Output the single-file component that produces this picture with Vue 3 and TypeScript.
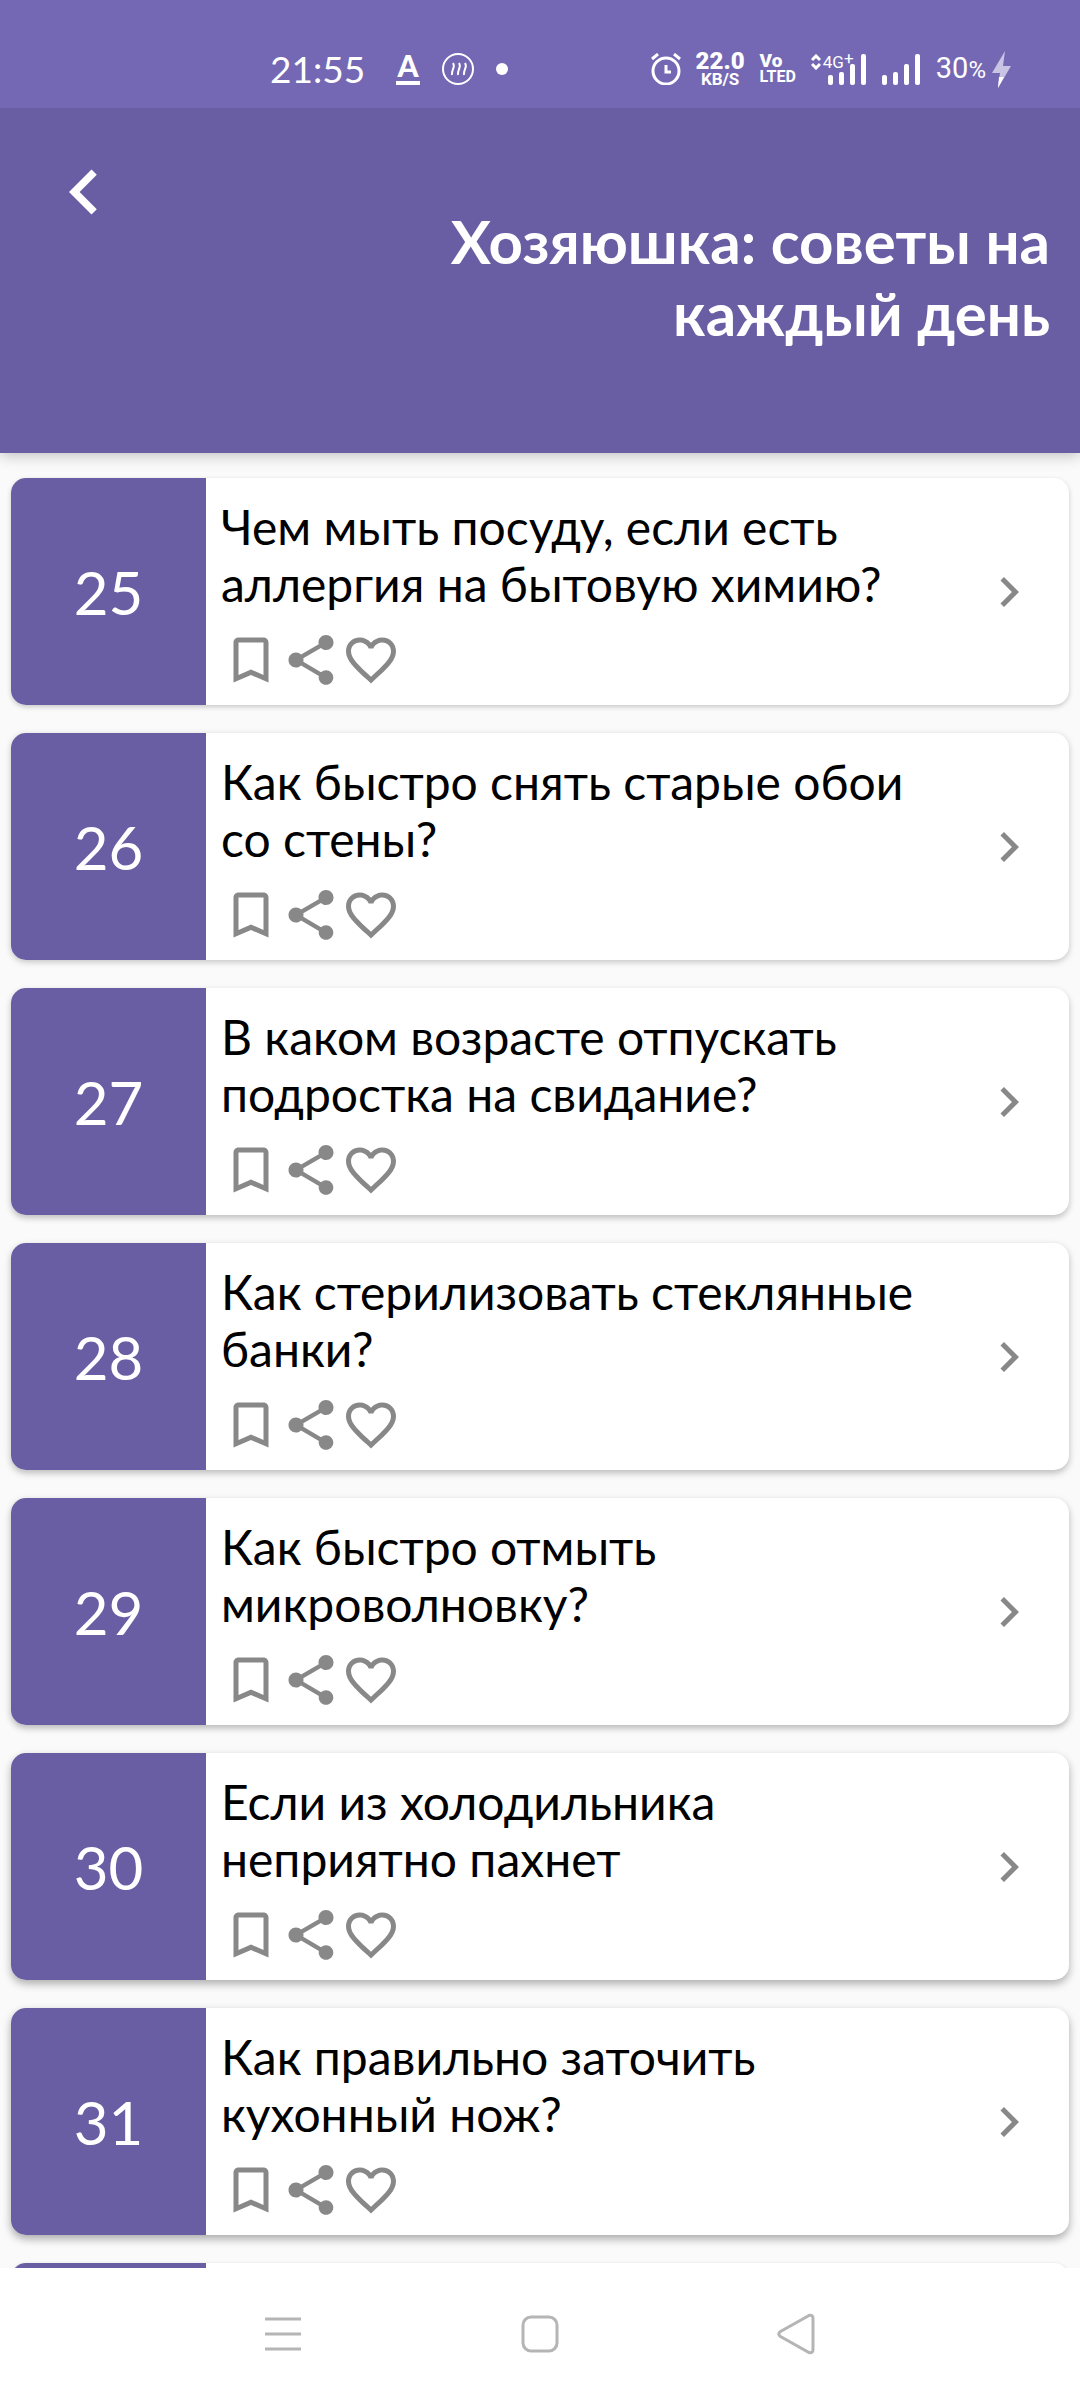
<script setup lang="ts">
interface Tip {
  number: number
  title: string
}

const tips: Tip[] = [
  { number: 25, title: 'Чем мыть посуду, если есть аллергия на бытовую химию?' },
  { number: 26, title: 'Как быстро снять старые обои со стены?' },
  { number: 27, title: 'В каком возрасте отпускать подростка на свидание?' },
  { number: 28, title: 'Как стерилизовать стеклянные банки?' },
  { number: 29, title: 'Как быстро отмыть микроволновку?' },
  { number: 30, title: 'Если из холодильника неприятно пахнет' },
  { number: 31, title: 'Как правильно заточить кухонный нож?' },
]

const shadowOf = (index: number): string =>
  `0 ${2 + Math.round(index / 3)}px ${5 + Math.round(index / 2)}px rgba(0, 0, 0, ${(0.2 + index * 0.02).toFixed(2)})`
</script>

<template>
  <div class="screen">
    <div class="status">
      <div class="status-left">
        <span class="clock">21:55</span>
        <span class="letter">A</span>
        <svg class="round" viewBox="0 0 34 34" aria-hidden="true">
          <circle cx="17" cy="17" r="15" />
          <path d="M12 11c3 4-2 7-1 12M18 11c3 4-2 7-1 12M24 11c3 4-2 7-1 12" />
        </svg>
        <span class="dot"></span>
      </div>
      <div class="status-right">
        <svg class="alarm" viewBox="0 0 30 32" aria-hidden="true">
          <circle cx="15" cy="18" r="13" />
          <path d="M1 6l6-5M29 6l-6-5M15 12v7h5" />
        </svg>
        <span class="speed"><b>22.0</b><small>KB/S</small></span>
        <span class="volte"><b>Vo</b><small>LTED</small></span>
        <span class="network">
          <svg class="updown" viewBox="0 0 10 16" aria-hidden="true">
            <path d="M1 6l4-4 4 4M1 10l4 4 4-4" />
          </svg>
          <span class="gen">4G<sup>+</sup></span>
          <svg class="bars" viewBox="0 0 39 31" aria-hidden="true">
            <rect x="0" y="21" width="5" height="10" rx="2" />
            <rect x="11" y="18" width="5" height="13" rx="2" />
            <rect x="22" y="10" width="5" height="21" rx="2" />
            <rect x="33" y="0" width="5" height="31" rx="2" />
          </svg>
        </span>
        <svg class="bars" viewBox="0 0 39 31" aria-hidden="true">
          <rect x="0" y="21" width="5" height="10" rx="2" />
          <rect x="11" y="18" width="5" height="13" rx="2" />
          <rect x="22" y="10" width="5" height="21" rx="2" />
          <rect x="33" y="0" width="5" height="31" rx="2" />
        </svg>
        <span class="battery">
          <span>30<small>%</small></span>
          <svg class="bolt" viewBox="0 0 20 37" aria-hidden="true">
            <path class="bolt-pale" d="M13 0L0 22h8L6 37 19 15h-8z" />
            <path class="bolt-full" d="M7 26h5L6 37z" />
          </svg>
        </span>
      </div>
    </div>

    <header class="header">
      <button class="back" type="button" aria-label="Назад">
        <svg viewBox="0 0 24 24"><path d="M15.41 7.41L14 6l-6 6 6 6 1.41-1.41L10.83 12z" /></svg>
      </button>
      <h1>Хозяюшка: советы на каждый день</h1>
    </header>

    <main class="list">
      <article
        v-for="(tip, index) in tips"
        :key="tip.number"
        class="card"
        :style="{ boxShadow: shadowOf(index) }"
      >
        <div class="number">{{ tip.number }}</div>
        <div class="body">
          <h2>{{ tip.title }}</h2>
          <div class="actions">
            <button type="button" aria-label="В закладки">
              <svg viewBox="0 0 24 24">
                <path d="M17 3H7c-1.1 0-2 .9-2 2v16l7-3 7 3V5c0-1.1-.9-2-2-2zm0 15l-5-2.18L7 18V5h10v13z" />
              </svg>
            </button>
            <button type="button" aria-label="Поделиться">
              <svg viewBox="0 0 24 24">
                <path d="M18 16.08c-.76 0-1.44.3-1.96.77L8.91 12.7c.05-.23.09-.46.09-.7s-.04-.47-.09-.7l7.05-4.11c.54.5 1.25.81 2.04.81 1.66 0 3-1.34 3-3s-1.34-3-3-3-3 1.34-3 3c0 .24.04.47.09.7L8.04 9.81C7.5 9.31 6.79 9 6 9c-1.66 0-3 1.34-3 3s1.34 3 3 3c.79 0 1.5-.31 2.04-.81l7.12 4.16c-.05.21-.08.43-.08.65 0 1.61 1.31 2.92 2.92 2.92s2.92-1.31 2.92-2.92-1.31-2.92-2.92-2.92z" />
              </svg>
            </button>
            <button type="button" aria-label="Нравится">
              <svg viewBox="0 0 24 24">
                <path d="M16.5 3c-1.74 0-3.41.81-4.5 2.09C10.91 3.81 9.24 3 7.5 3 4.42 3 2 5.42 2 8.5c0 3.78 3.4 6.86 8.55 11.54L12 21.35l1.45-1.32C18.6 15.36 22 12.28 22 8.5 22 5.42 19.58 3 16.5 3zm-4.4 15.55l-.1.1-.1-.1C7.14 14.24 4 11.39 4 8.5 4 6.5 5.5 5 7.5 5c1.54 0 3.04.99 3.57 2.36h1.87C13.46 5.99 14.96 5 16.5 5c2 0 3.5 1.5 3.5 3.5 0 2.89-3.14 5.74-7.9 10.05z" />
              </svg>
            </button>
          </div>
        </div>
        <a class="open" href="#" :aria-label="tip.title">
          <svg viewBox="0 0 24 24"><path d="M10 6L8.59 7.41 13.17 12l-4.58 4.59L10 18l6-6z" /></svg>
        </a>
      </article>
      <article class="card upcoming"><div class="number"></div></article>
    </main>

    <nav class="nav">
      <button type="button" aria-label="Недавние">
        <svg viewBox="0 0 42 42"><path d="M3 6h36M3 21h36M3 36h36" /></svg>
      </button>
      <button type="button" aria-label="Домой">
        <svg viewBox="0 0 42 42"><rect x="4" y="4" width="34" height="34" rx="8" /></svg>
      </button>
      <button type="button" aria-label="Назад">
        <svg viewBox="0 0 42 42"><path d="M33 2.500L4.500 18.500q-3.500 2.500 0 5L33 39.500q4 1 4-3v-31q0-4-4-3z" /></svg>
      </button>
    </nav>
  </div>
</template>

<style>
body {
  margin: 0;
}
</style>

<style scoped>
.screen {
  display: flex;
  flex-direction: column;
  height: 100vh;
  background: #fafafa;
  font-family: Lato, "Noto Sans", sans-serif;
}

button {
  display: flex;
  padding: 0;
  border: 0;
  background: none;
}

svg {
  display: block;
  flex: none;
}

/* Status bar, kept above the shadow of the header */
.status {
  position: relative;
  z-index: 1;
  display: flex;
  flex: none;
  align-items: center;
  justify-content: space-between;
  box-sizing: border-box;
  height: 108px;
  padding: 30px 68px 0 270px;
  background: #7468b4;
  color: #fff;
}

.status-left,
.status-right,
.battery {
  display: flex;
  align-items: center;
}

.status-left {
  gap: 21px;
}

.status-right {
  gap: 15px;
}

.clock {
  margin-right: 10px;
  font-size: 37px;
  line-height: 40px;
}

.letter {
  width: 24px;
  padding-bottom: 5px;
  border-bottom: 4px solid #fff;
  font-size: 30px;
  font-weight: 900;
  line-height: 22px;
  text-align: center;
}

.round {
  width: 34px;
  height: 34px;
  fill: none;
  stroke: #fff;
  stroke-width: 2;
}

.dot {
  width: 12px;
  height: 12px;
  border-radius: 50%;
  background: #fff;
}

.alarm {
  width: 30px;
  height: 32px;
  fill: none;
  stroke: #fff;
  stroke-width: 3;
}

.speed,
.volte {
  display: flex;
  flex-direction: column;
  font-family: Roboto, sans-serif;
  font-weight: 700;
}

.speed {
  align-items: center;
}

.speed b {
  font-size: 24px;
  line-height: 20px;
}

.speed small {
  font-size: 17px;
  line-height: 17px;
}

.volte b {
  font-size: 19px;
  font-weight: 900;
  line-height: 16px;
}

.volte small {
  font-size: 16px;
  font-weight: 700;
  line-height: 16px;
}

.network {
  position: relative;
  display: flex;
  justify-content: flex-end;
  width: 56px;
}

.updown {
  position: absolute;
  top: 0;
  left: 0;
  width: 10px;
  height: 16px;
  fill: none;
  stroke: #fff;
  stroke-width: 3;
}

.gen {
  position: absolute;
  top: 0;
  left: 12px;
  font-family: Roboto, sans-serif;
  font-size: 17px;
  line-height: 17px;
}

.gen sup {
  position: absolute;
  top: -4px;
  font-size: 17px;
  line-height: 17px;
}

.bars {
  width: 39px;
  height: 31px;
  fill: #fff;
}

.battery {
  gap: 6px;
  font-family: Roboto, sans-serif;
  font-size: 29px;
  font-weight: 400;
  line-height: 32px;
}

.battery small {
  font-size: 24px;
}

.bolt {
  width: 20px;
  height: 37px;
}

.bolt-pale {
  fill: #c9c4e3;
}

.bolt-full {
  fill: #fff;
}

/* Header */
.header {
  position: relative;
  display: flex;
  flex: none;
  align-items: flex-start;
  justify-content: space-between;
  box-sizing: border-box;
  height: 345px;
  padding: 39px 30px 0 39px;
  background: #695da3;
  box-shadow: 0 2px 14px rgba(0, 0, 0, 0.25);
  color: #fff;
}

.back svg {
  width: 90px;
  height: 90px;
  fill: #fff;
}

h1 {
  width: 66%;
  margin: 58px 0 0;
  font-size: 60px;
  font-weight: 700;
  line-height: 72px;
  text-align: right;
}

/* Tips */
.list {
  display: flex;
  flex: 1;
  flex-direction: column;
  gap: 28px;
  min-height: 0;
  overflow: hidden;
  padding: 25px 11px 0;
}

.card {
  display: flex;
  flex: none;
  align-items: center;
  min-height: 227px;
  border-radius: 15px;
  background: #fff;
}

.upcoming {
  box-shadow: 0 2px 5px rgba(0, 0, 0, 0.2);
}

.number {
  display: flex;
  flex: none;
  align-self: stretch;
  align-items: center;
  justify-content: center;
  width: 195px;
  border-radius: 15px 0 0 15px;
  background: #695da3;
  color: #fff;
  font-size: 60px;
  line-height: 72px;
}

.body {
  flex: 1;
  padding: 4px 15px 0;
}

h2 {
  max-width: 710px;
  margin: 0 0 18px;
  color: #000;
  font-size: 48px;
  font-weight: 400;
  line-height: 57px;
}

.actions {
  display: flex;
}

.actions svg,
.open svg {
  width: 60px;
  height: 60px;
  fill: #888;
}

.open {
  margin-right: 30px;
}

/* Navigation bar */
.nav {
  display: grid;
  flex: none;
  grid-template-columns: repeat(3, 1fr);
  align-items: center;
  justify-items: center;
  height: 132px;
  padding: 0 154px;
  background: #fff;
}

.nav svg {
  width: 42px;
  height: 42px;
  fill: none;
  stroke: #b5b5b5;
  stroke-width: 3;
}
</style>
